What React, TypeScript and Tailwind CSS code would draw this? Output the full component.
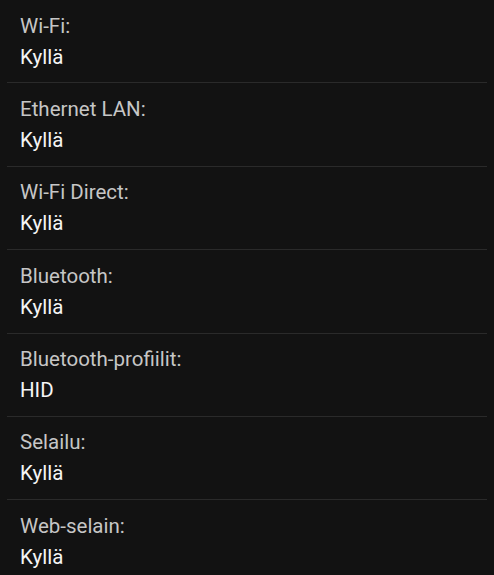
import React from 'react';

const rows = [
  { label: 'Wi-Fi:', value: 'Kyllä' },
  { label: 'Ethernet LAN:', value: 'Kyllä' },
  { label: 'Wi-Fi Direct:', value: 'Kyllä' },
  { label: 'Bluetooth:', value: 'Kyllä' },
  { label: 'Bluetooth-profiilit:', value: 'HID' },
  { label: 'Selailu:', value: 'Kyllä' },
  { label: 'Web-selain:', value: 'Kyllä' },
];

export default function App() {
  return (
    <div className="min-h-screen bg-[#121212] font-['Roboto',sans-serif] overflow-hidden">
      <div className="mx-[7px]">
        {rows.map((row) => (
          <div key={row.label} className="border-b border-[#2a2a2a] px-[13px] pt-[10.5px] pb-[9.9px]">
            <div className="text-[20.5px] leading-[31px] text-[#c6c6c6]">{row.label}</div>
            <div className="text-[20.5px] leading-[31px] text-[#f5f5f5]">{row.value}</div>
          </div>
        ))}
      </div>
    </div>
  );
}
